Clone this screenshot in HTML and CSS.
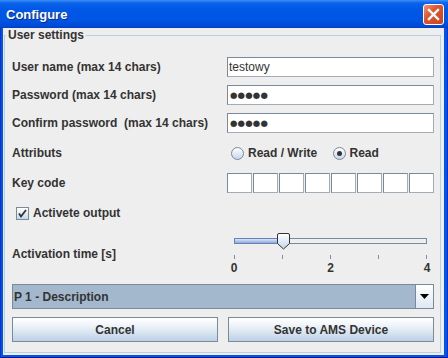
FILE: index.html
```html
<!DOCTYPE html>
<html lang="en">

<head>
    <meta charset="UTF-8">
    <title>Configure</title>
    <link rel="stylesheet" href="styles.css">
</head>

<body>
    <div class="window">
        <div class="titlebar">
            <span class="title">Configure</span>
            <span class="close">
                <svg width="13" height="13" viewBox="0 0 13 13">
                    <path d="M2 2 L11 11 M11 2 L2 11" stroke="#fff" stroke-width="2.4" stroke-linecap="square" />
                </svg>
            </span>
        </div>

        <div class="client">
            <fieldset class="group">
                <legend>User settings</legend>

                <div class="row">
                    <label class="label">User name (max 14 chars)</label>
                    <div class="textfield">testowy</div>
                </div>
                <div class="row">
                    <label class="label">Password (max 14 chars)</label>
                    <div class="textfield password">●●●●●</div>
                </div>
                <div class="row">
                    <label class="label">Confirm password &nbsp;(max 14 chars)</label>
                    <div class="textfield password">●●●●●</div>
                </div>

                <div class="row row-tall">
                    <label class="label">Attributs</label>
                    <div class="radios">
                        <span class="option"><i class="radio"></i>Read / Write</span>
                        <span class="option"><i class="radio checked"></i>Read</span>
                    </div>
                </div>

                <div class="row">
                    <label class="label">Key code</label>
                    <div class="keycode">
                        <span></span><span></span><span></span><span></span>
                        <span></span><span></span><span></span><span></span>
                    </div>
                </div>

                <div class="check-row">
                    <span class="checkbox">
                        <svg width="11" height="11" viewBox="0 0 11 11">
                            <path d="M2 5.5 L4 8.5 L9 2" stroke="#333" stroke-width="1.8" fill="none" />
                        </svg>
                    </span>
                    <span class="label">Activete output</span>
                </div>

                <div class="row slider-row">
                    <label class="label slider-label">Activation time [s]</label>
                    <div class="slider">
                        <div class="track"><div class="fill"></div></div>
                        <svg class="thumb" width="15" height="17" viewBox="0 0 15 17">
                            <defs>
                                <linearGradient id="thumbGrad" x1="0" y1="0" x2="0" y2="1">
                                    <stop offset="0" stop-color="#ffffff" />
                                    <stop offset="1" stop-color="#c4d6ec" />
                                </linearGradient>
                            </defs>
                            <path d="M1.5 2 Q1.5 0.5 3 0.5 L12 0.5 Q13.5 0.5 13.5 2 L13.5 10.5 L7.5 16 L1.5 10.5 Z"
                                fill="url(#thumbGrad)" stroke="#333" stroke-width="1" />
                        </svg>
                        <div class="ticks"><i></i><i></i><i></i><i></i><i></i></div>
                        <div class="tick-labels"><span>0</span><span>2</span><span>4</span></div>
                    </div>
                </div>

                <div class="combo">
                    <span class="combo-text">P 1 - Description</span>
                    <span class="combo-arrow">
                        <svg width="9" height="5" viewBox="0 0 9 5"><path d="M0 0 L9 0 L4.5 5 Z" fill="#000" /></svg>
                    </span>
                </div>

                <div class="buttons">
                    <button class="btn">Cancel</button>
                    <button class="btn">Save to AMS Device</button>
                </div>
            </fieldset>
        </div>
    </div>
</body>

</html>
```

FILE: styles.css
```css
* {
    box-sizing: border-box;
    margin: 0;
    padding: 0;
}

body {
    width: 448px;
    height: 358px;
    overflow: hidden;
    font-family: "Liberation Sans", Arial, sans-serif;
    font-size: 12px;
    color: #333333;
}

/* fenetre XP */
.window {
    height: 358px;
    display: flex;
    flex-direction: column;
    background: #0055e5;
    border-left: 1px solid #0831d9;
    border-right: 1px solid #0831d9;
    border-bottom: 1px solid #00138c;
    padding: 0 3px 2px 2px;
}

.titlebar {
    height: 28px;
    margin: 0 -4px 0 -3px;
    padding: 0 4px 0 6px;
    display: flex;
    align-items: center;
    justify-content: space-between;
    background: linear-gradient(to bottom, #3d8ef8 0px, #0a63ea 3px, #0058e6 9px, #0055e3 20px, #004ad6 26px, #003fbf 28px);
}

.title {
    color: #ffffff;
    font-weight: bold;
    font-size: 13px;
    text-shadow: 1px 1px 0 #0a2a8a;
    padding-top: 1px;
}

.close {
    width: 21px;
    height: 21px;
    border: 1px solid #ffffff;
    border-radius: 3px;
    background: linear-gradient(135deg, #f0937a 0%, #e0542f 40%, #cc4420 100%);
    display: flex;
    align-items: center;
    justify-content: center;
}

.client {
    flex: 1;
    background: #eeeeee;
    display: flex;
}

.group {
    flex: 1;
    margin: 0 3px 2px 1px;
    border: 1px solid #b8cfe5;
    padding: 15px 6px 9px 7px;
    display: flex;
    flex-direction: column;
    gap: 8px;
}

.group legend {
    font-weight: bold;
    font-size: 12px;
    line-height: 14px;
    padding: 0 2px;
    margin-left: -6px;
}

.label {
    font-weight: bold;
    white-space: nowrap;
}

.row {
    display: grid;
    grid-template-columns: 1fr 207px;
    align-items: center;
    height: 20px;
}

.row-tall {
    height: 24px;
}

.textfield {
    height: 20px;
    background: #ffffff;
    border: 1px solid #7a8a99;
    border-right-color: #a4adb6;
    border-bottom-color: #a4adb6;
    padding-left: 1px;
    line-height: 18px;
}

.password {
    font-family: "DejaVu Sans", sans-serif;
    font-size: 8.5px;
    letter-spacing: 0.2px;
    padding-left: 2px;
}

/* boutons radio */
.radios {
    display: flex;
    align-items: center;
    padding-left: 4px;
}

.option {
    display: flex;
    align-items: center;
    gap: 4px;
    font-weight: bold;
    width: 104px;
}

.radio {
    width: 13px;
    height: 13px;
    border-radius: 50%;
    border: 1px solid #7a8a99;
    background: linear-gradient(to bottom, #ffffff, #c6d7ec);
    display: flex;
    align-items: center;
    justify-content: center;
}

.radio.checked::after {
    content: "";
    width: 5px;
    height: 5px;
    border-radius: 50%;
    background: #333333;
}

.keycode {
    display: flex;
    gap: 1px;
    height: 20px;
}

.keycode span {
    flex: 1;
    background: #ffffff;
    border: 1px solid #7a8a99;
    border-right-color: #a4adb6;
    border-bottom-color: #a4adb6;
}

.check-row {
    height: 24px;
    display: flex;
    align-items: center;
    gap: 4px;
    padding-left: 4px;
}

.checkbox {
    width: 13px;
    height: 13px;
    border: 1px solid #7a8a99;
    background: linear-gradient(to bottom, #ffffff, #c6d7ec);
    display: flex;
    align-items: center;
    justify-content: center;
}

/* slider */
.slider-row {
    height: 43px;
    align-items: start;
}

.slider-label {
    padding-top: 14px;
    line-height: 14px;
}

.slider {
    position: relative;
    height: 43px;
}

.track {
    margin: 5px 7px 0 7px;
    height: 6px;
    border: 1px solid #7a8a99;
    background: #eeeeee;
}

.fill {
    width: 50px;
    height: 4px;
    background: linear-gradient(to bottom, #dce6f4, #8eaad6);
    box-shadow: 0 0 0 1px #6382bf;
}

.thumb {
    position: absolute;
    left: 49px;
    top: 0;
}

.ticks {
    margin: 11px 7px 0 7px;
    display: flex;
    justify-content: space-between;
    height: 4px;
}

.ticks i {
    width: 1px;
    background: #7a8cba;
}

.tick-labels {
    margin: 2px 1px 0 1px;
    display: flex;
    justify-content: space-between;
    font-weight: bold;
    line-height: 14px;
}

.tick-labels span {
    width: 12px;
    text-align: center;
}

/* combo */
.combo {
    height: 25px;
    border: 1px solid #7a8a99;
    background: #a3b8cc;
    display: flex;
    align-items: center;
}

.combo-text {
    flex: 1;
    font-weight: bold;
    padding-left: 1px;
}

.combo-arrow {
    width: 18px;
    height: 23px;
    border-left: 1px solid #7a8a99;
    background: linear-gradient(to bottom, #ffffff, #dde8f3);
    display: flex;
    align-items: center;
    justify-content: center;
}

.buttons {
    display: flex;
    gap: 10px;
}

.btn {
    flex: 1;
    height: 25px;
    border: 1px solid #7a8a99;
    background: linear-gradient(to bottom, #ffffff 0%, #f3f7fb 25%, #dbe6f2 60%, #bcd0e6 100%);
    font-family: "Liberation Sans", Arial, sans-serif;
    font-size: 12px;
    font-weight: bold;
    color: #333333;
}
```
